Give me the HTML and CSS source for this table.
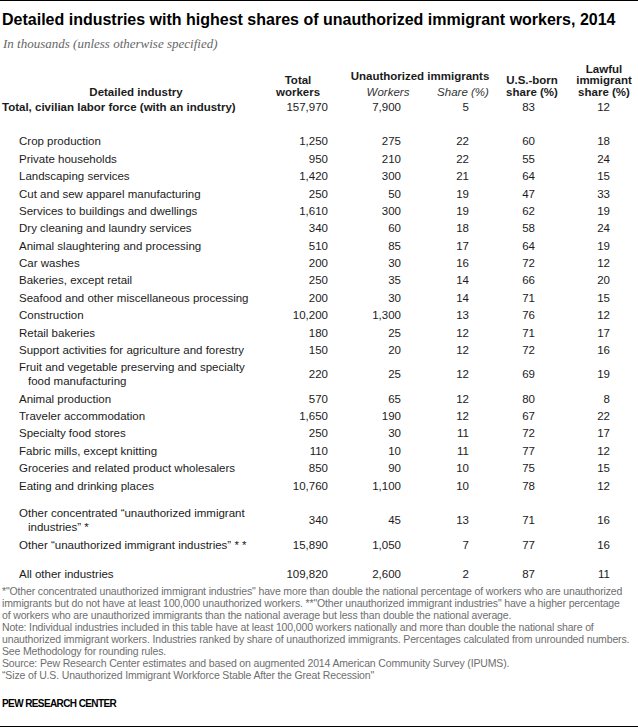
FILE: index.html
```html
<!DOCTYPE html>
<html lang="en">
<head>
<meta charset="utf-8">
<title>Detailed industries with highest shares of unauthorized immigrant workers, 2014</title>
<link rel="stylesheet" href="styles.css">
</head>
<body>
<div class="page">
  <h1 class="title">Detailed industries with highest shares of unauthorized immigrant workers, 2014</h1>
  <p class="subtitle">In thousands (unless otherwise specified)</p>
  <div class="table" role="table">
    <div class="head cols" role="row">
      <div class="h h-ind" role="columnheader">Detailed industry</div>
      <div class="h h-tot" role="columnheader">Total<br>workers</div>
      <div class="h h-unauth" role="columnheader">Unauthorized immigrants</div>
      <div class="h h-sub h-wk" role="columnheader">Workers</div>
      <div class="h h-sub h-sh" role="columnheader">Share (%)</div>
      <div class="h h-us" role="columnheader">U.S.-born<br>share (%)</div>
      <div class="h h-lw" role="columnheader">Lawful<br>immigrant<br>share (%)</div>
    </div>

    <div class="row cols total" role="row"><span class="lbl">Total, civilian labor force (with an industry)</span><span>157,970</span><span>7,900</span><span>5</span><span>83</span><span>12</span></div>

    <div class="row cols gap-row" role="row"><span class="lbl">Crop production</span><span>1,250</span><span>275</span><span>22</span><span>60</span><span>18</span></div>
    <div class="row cols" role="row"><span class="lbl">Private households</span><span>950</span><span>210</span><span>22</span><span>55</span><span>24</span></div>
    <div class="row cols" role="row"><span class="lbl">Landscaping services</span><span>1,420</span><span>300</span><span>21</span><span>64</span><span>15</span></div>
    <div class="row cols" role="row"><span class="lbl">Cut and sew apparel manufacturing</span><span>250</span><span>50</span><span>19</span><span>47</span><span>33</span></div>
    <div class="row cols" role="row"><span class="lbl">Services to buildings and dwellings</span><span>1,610</span><span>300</span><span>19</span><span>62</span><span>19</span></div>
    <div class="row cols" role="row"><span class="lbl">Dry cleaning and laundry services</span><span>340</span><span>60</span><span>18</span><span>58</span><span>24</span></div>
    <div class="row cols" role="row"><span class="lbl">Animal slaughtering and processing</span><span>510</span><span>85</span><span>17</span><span>64</span><span>19</span></div>
    <div class="row cols" role="row"><span class="lbl">Car washes</span><span>200</span><span>30</span><span>16</span><span>72</span><span>12</span></div>
    <div class="row cols" role="row"><span class="lbl">Bakeries, except retail</span><span>250</span><span>35</span><span>14</span><span>66</span><span>20</span></div>
    <div class="row cols" role="row"><span class="lbl">Seafood and other miscellaneous processing</span><span>200</span><span>30</span><span>14</span><span>71</span><span>15</span></div>
    <div class="row cols" role="row"><span class="lbl">Construction</span><span>10,200</span><span>1,300</span><span>13</span><span>76</span><span>12</span></div>
    <div class="row cols" role="row"><span class="lbl">Retail bakeries</span><span>180</span><span>25</span><span>12</span><span>71</span><span>17</span></div>
    <div class="row cols" role="row"><span class="lbl">Support activities for agriculture and forestry</span><span>150</span><span>20</span><span>12</span><span>72</span><span>16</span></div>
    <div class="row cols" role="row"><span class="lbl">Fruit and vegetable preserving and specialty<br><span class="cont">food manufacturing</span></span><span>220</span><span>25</span><span>12</span><span>69</span><span>19</span></div>
    <div class="row cols" role="row"><span class="lbl">Animal production</span><span>570</span><span>65</span><span>12</span><span>80</span><span>8</span></div>
    <div class="row cols" role="row"><span class="lbl">Traveler accommodation</span><span>1,650</span><span>190</span><span>12</span><span>67</span><span>22</span></div>
    <div class="row cols" role="row"><span class="lbl">Specialty food stores</span><span>250</span><span>30</span><span>11</span><span>72</span><span>17</span></div>
    <div class="row cols" role="row"><span class="lbl">Fabric mills, except knitting</span><span>110</span><span>10</span><span>11</span><span>77</span><span>12</span></div>
    <div class="row cols" role="row"><span class="lbl">Groceries and related product wholesalers</span><span>850</span><span>90</span><span>10</span><span>75</span><span>15</span></div>
    <div class="row cols" role="row"><span class="lbl">Eating and drinking places</span><span>10,760</span><span>1,100</span><span>10</span><span>78</span><span>12</span></div>

    <div class="row cols sep-a" role="row"><span class="lbl">Other concentrated “unauthorized immigrant<br><span class="cont">industries” *</span></span><span>340</span><span>45</span><span>13</span><span>71</span><span>16</span></div>
    <div class="row cols sep-b" role="row"><span class="lbl">Other “unauthorized immigrant industries” * *</span><span>15,890</span><span>1,050</span><span>7</span><span>77</span><span>16</span></div>
    <div class="row cols sep-c" role="row"><span class="lbl">All other industries</span><span>109,820</span><span>2,600</span><span>2</span><span>87</span><span>11</span></div>
  </div>

  <div class="notes">
    <span class="line">*"Other concentrated unauthorized immigrant industries" have more than double the national percentage of workers who are unauthorized</span>
    <span class="line">immigrants but do not have at least 100,000 unauthorized workers. **"Other unauthorized immigrant industries" have a higher percentage</span>
    <span class="line">of workers who are unauthorized immigrants than the national average but less than double the national average.</span>
    <span class="line">Note: Individual industries included in this table have at least 100,000 workers nationally and more than double the national share of</span>
    <span class="line">unauthorized immigrant workers. Industries ranked by share of unauthorized immigrants. Percentages calculated from unrounded numbers.</span>
    <span class="line">See Methodology for rounding rules.</span>
    <span class="line">Source: Pew Research Center estimates and based on augmented 2014 American Community Survey (IPUMS).</span>
    <span class="line">“Size of U.S. Unauthorized Immigrant Workforce Stable After the Great Recession"</span>
  </div>
  <div class="org">PEW RESEARCH CENTER</div>
</div>
</body>
</html>
```

FILE: styles.css
```css
html, body {
  margin: 0;
  padding: 0;
  background: #fff;
}

.page {
  width: 638px;
  height: 727px;
  box-sizing: border-box;
  border-top: 1px solid #000;
  border-bottom: 1px solid #000;
  padding: 0 0 0 2px;
  overflow: hidden;
  font-family: "Liberation Sans", Arial, sans-serif;
  color: #1b1b1b;
}

.title {
  margin: 9px 0 0 0;
  font-weight: bold;
  font-size: 16px;
  line-height: 20px;
  color: #000;
  white-space: nowrap;
}

.subtitle {
  margin: 6px 0 0 1px;
  font-family: "Liberation Serif", "Times New Roman", serif;
  font-style: italic;
  font-size: 13px;
  line-height: 16px;
  color: #666;
}

/* shared column template */
.cols {
  display: grid;
  grid-template-columns: 260px 72px 92px 74px 64px 74px;
}

.table {
  margin-top: 11.5px;
  width: 636px;
}

/* header */
.head {
  grid-template-rows: auto 11.5px;
  font-weight: bold;
  font-size: 11.5px;
  line-height: 11.5px;
  text-align: center;
}

.h { align-self: end; }
.h-ind { grid-column: 1; grid-row: 1 / 3; padding-left: 8px; }
.h-tot { grid-column: 2; grid-row: 1 / 3; }
.h-unauth { grid-column: 3 / 5; grid-row: 1; padding: 0 0 4.5px 6px; }
.h-wk { grid-column: 3; grid-row: 2; padding-left: 16px; }
.h-sh { grid-column: 4; grid-row: 2; }
.h-us { grid-column: 5; grid-row: 1 / 3; }
.h-lw { grid-column: 6; grid-row: 1 / 3; padding-left: 6px; }

.h-sub {
  font-weight: normal;
  font-style: italic;
  color: #333;
}

/* body rows */
.row {
  align-items: center;
  font-size: 11.5px;
  line-height: 14px;
  padding: 1.7px 0;
  text-align: right;
  white-space: nowrap;
}

.row > span:nth-child(2) { padding-right: 6px; }
.row > span:nth-child(3) { padding-right: 25px; }
.row > span:nth-child(4) { padding-right: 31px; }
.row > span:nth-child(5) { padding-right: 29px; }
.row > span:nth-child(6) { padding-right: 28px; }

.row > .lbl {
  text-align: left;
  padding-left: 17px;
}

.cont {
  padding-left: 9px;
}

.total { margin-top: 0; }
.total > .lbl {
  padding-left: 0;
  font-weight: bold;
}

.gap-row { margin-top: 17.4px; }
.sep-a { margin-top: 9.9px; }
.sep-b { margin-top: 0.8px; }
.sep-c { margin-top: 11.6px; }

/* footnotes */
.notes {
  margin-top: 2.8px;
  font-size: 10.5px;
  line-height: 12px;
  letter-spacing: -0.15px;
  color: #6e6e6e;
}

.notes .line {
  display: block;
  white-space: nowrap;
}

.org {
  margin-top: 17px;
  font-weight: bold;
  font-size: 10px;
  line-height: 12px;
  letter-spacing: -0.6px;
  color: #000;
}
```
